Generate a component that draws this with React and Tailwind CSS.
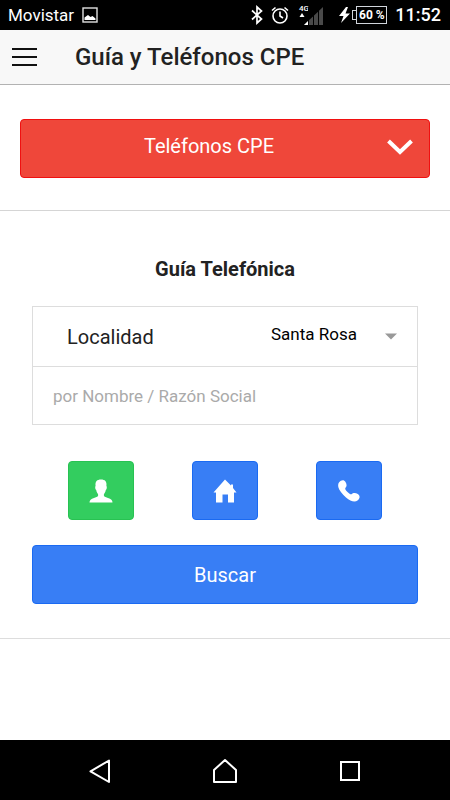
import React, { useState } from 'react';

const StatusBar = () => (
  <div className="flex h-[30px] items-center justify-between bg-black pl-2 pr-[9px] text-white">
    <div className="flex items-center gap-2">
      <span className="text-[17px] leading-[30px]">Movistar</span>
      <svg className="h-4 w-4" viewBox="0 0 16 16" aria-hidden="true">
        <rect x="1" y="1" width="14" height="14" fill="none" stroke="#e0e0e0" strokeWidth="1.4" />
        <path d="M2.5 13V10.500L6 8L8.500 10L10.500 9L13.500 11.500V13Z" fill="#fff" />
      </svg>
    </div>
    <div className="flex items-center">
      <svg className="mr-2 h-5 w-3" viewBox="0 0 12 20" fill="none" stroke="#fff" strokeWidth="1.7" aria-hidden="true">
        <path d="M1 5.500L10.500 14L6 18V2L10.500 6L1 14.500" />
      </svg>
      <svg className="mr-2 h-[18px] w-[18px]" viewBox="0 0 18 18" fill="none" stroke="#fff" strokeWidth="1.600" aria-hidden="true">
        <circle cx="9" cy="10" r="7" />
        <path d="M9 5.500V10L12 12M1 4.500L4.500 1.500M17 4.500L13.500 1.500" />
      </svg>
      <svg className="mr-4 h-[24px] w-[26px]" viewBox="0 0 26 24" aria-hidden="true">
        <text x="2" y="8" fill="#fff" fontSize="8" fontWeight="500" fontFamily="Roboto, sans-serif">4G</text>
        <path d="M2.500 14L5 10L7.500 14Z" fill="#fff" />
        <path d="M7 22L26 4V22Z" fill="#4a4a4a" />
        <path d="M7 22L11 18V22Z" fill="#fff" />
        <path d="M11.500 4V24M16.500 4V24M21.500 4V24" stroke="#000" />
      </svg>
      <svg className="mr-[2px] h-4 w-[11px]" viewBox="0 0 11 16" fill="#fff" aria-hidden="true">
        <path d="M7 0L0 9H4.500L2 16L11 6.500H6.500L9 0Z" />
      </svg>
      <div className="flex items-center">
        <span className="h-[10px] w-1 border border-r-0 border-gray-300" />
        <span className="h-[18px] w-[31px] border border-gray-300 text-center text-xs leading-4 font-bold whitespace-nowrap">60 %</span>
      </div>
      <span className="ml-2 text-lg leading-[30px] font-medium">11:52</span>
    </div>
  </div>
);

const PersonIcon = () => (
  <svg className="h-6 w-6" viewBox="0 0 24 24" fill="currentColor" aria-hidden="true">
    <path d="M0.500 23.500C0.500 21 2 20 5 19C8 18 9.200 17.500 9.200 16C9.200 14.500 7.500 13.500 7.200 11C6.500 10.500 6.200 9.500 6.200 8C6.200 7.500 6.300 7.200 6.600 7C6 2.500 8 0.500 12 0.500C16 0.500 18 2.500 17.400 7C17.700 7.200 17.800 7.500 17.800 8C17.800 9.500 17.500 10.500 16.800 11C16.500 13.500 14.800 14.500 14.800 16C14.800 17.500 16 18 19 19C22 20 23.500 21 23.500 23.500Z" />
  </svg>
);

const HomeIcon = () => (
  <svg className="h-6 w-6" viewBox="0 0 24 24" fill="currentColor" aria-hidden="true">
    <path d="M12 0.500L18 6.500V5.500H20V9L23.500 13.500H21V23.500H15V15.500H9.500V23.500H3V13.500H0.500Z" />
  </svg>
);

const CallIcon = () => (
  <svg className="h-6 w-6" viewBox="0 0 24 24" fill="currentColor" aria-hidden="true">
    <path d="M2 3.500C4 1 7 0.500 8.500 3C10 5.500 10 7.500 8.300 9C8 10 8.500 11 10.500 13C12.500 15 13.500 15.500 14.500 15.300C16 13.500 18.500 13.500 20.800 15C23.500 17 23 19.500 20.500 21.500C18 23.500 13.500 22.500 9 18.500C5 15 2 11 1.300 8C1 6 1.200 4.500 2 3.500Z" />
  </svg>
);

const filters = [
  { id: 'nombre', label: 'Nombre', Icon: PersonIcon },
  { id: 'direccion', label: 'Dirección', Icon: HomeIcon },
  { id: 'telefono', label: 'Teléfono', Icon: CallIcon },
];

const NavBar = () => (
  <nav className="grid h-[60px] grid-cols-3 place-items-center bg-black px-[37px] pt-1 text-white">
    <button type="button" aria-label="Atrás">
      <svg className="h-7 w-7" viewBox="0 0 28 28" fill="none" stroke="currentColor" strokeWidth="2" strokeLinejoin="round" aria-hidden="true">
        <path d="M23 2.500V24L4.500 13.300Z" />
      </svg>
    </button>
    <button type="button" aria-label="Inicio">
      <svg className="h-7 w-7" viewBox="0 0 28 28" fill="none" stroke="currentColor" strokeWidth="2" strokeLinejoin="round" aria-hidden="true">
        <path d="M14 2L25 12V24H3V12Z" />
      </svg>
    </button>
    <button type="button" aria-label="Recientes">
      <svg className="h-7 w-7" viewBox="0 0 28 28" fill="none" stroke="currentColor" strokeWidth="2" aria-hidden="true">
        <rect x="5" y="4" width="18" height="18" />
      </svg>
    </button>
  </nav>
);

const App = () => {
  const [filter, setFilter] = useState('nombre');
  return (
    <div className="flex min-h-screen flex-col bg-white font-['Roboto',sans-serif] text-[#222]">
      <StatusBar />
      <header className="flex h-[55px] items-center border-b border-[#b2b2b2] bg-[#f8f8f8] px-3">
        <button type="button" aria-label="Menú" className="mr-[38px]">
          <svg className="h-5 w-[25px]" viewBox="0 0 25 20" stroke="#111" strokeWidth="2" aria-hidden="true">
            <path d="M0 2H25M0 10H25M0 18H25" />
          </svg>
        </button>
        <h1 className="text-2xl font-medium">Guía y Teléfonos CPE</h1>
      </header>
      <main className="flex-1">
        <section className="border-b border-[#d5d5d5] px-5 pt-[34px] pb-8">
          <button type="button" className="flex h-[59px] w-full items-center rounded border border-[#f01010] bg-[#ef473a] px-4 pb-1 text-white">
            <span className="flex-1 pr-[6px] pb-[2px] text-xl">Teléfonos CPE</span>
            <svg className="h-4 w-[26px]" viewBox="0 0 26 16" fill="none" stroke="currentColor" strokeWidth="4" aria-hidden="true">
              <path d="M1.500 2L13 13L24.500 2" />
            </svg>
          </button>
        </section>
        <section className="border-b border-[#ddd] px-8 pt-11 pb-[34px]">
          <h2 className="text-center text-xl leading-7 font-bold">Guía Telefónica</h2>
          <div className="mt-[23px] border border-[#ddd]">
            <div className="flex h-[60px] items-center justify-between border-b border-[#ddd] pr-5 pl-[34px]">
              <label htmlFor="localidad" className="text-xl">Localidad</label>
              <div className="flex items-center">
                <select id="localidad" className="appearance-none bg-transparent pr-7 pb-1 text-[17px] text-black">
                  <option>Santa Rosa</option>
                </select>
                <svg className="h-[7px] w-3" viewBox="0 0 12 7" fill="#999" aria-hidden="true">
                  <path d="M0 0.500H12L6 6.500Z" />
                </svg>
              </div>
            </div>
            <input
              type="text"
              aria-label="Nombre o razón social"
              placeholder="por Nombre / Razón Social"
              className="block h-[57px] w-full px-5 text-[17px] placeholder:text-[#aaa]"
            />
          </div>
          <div className="mt-9 grid grid-cols-3 justify-items-center px-[7px]">
            {filters.map(({ id, label, Icon }) => (
              <button
                key={id}
                type="button"
                aria-label={label}
                onClick={() => setFilter(id)}
                className={`flex h-[59px] w-[66px] items-center justify-center rounded border text-white ${
                  filter === id ? 'border-[#28c252] bg-[#33cd5f]' : 'border-[#1a6af2] bg-[#387ef5]'
                }`}
              >
                <Icon />
              </button>
            ))}
          </div>
          <button type="button" className="mt-[25px] h-[59px] w-full rounded border border-[#1a6af2] bg-[#387ef5] text-xl text-white">
            Buscar
          </button>
        </section>
      </main>
      <NavBar />
    </div>
  );
};

export default App;
